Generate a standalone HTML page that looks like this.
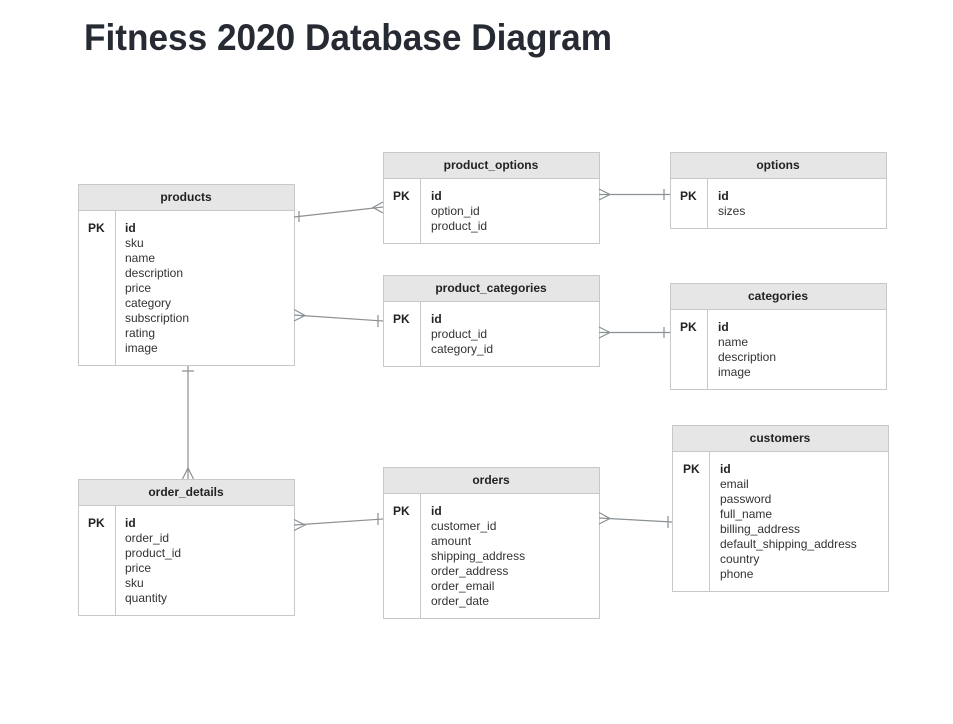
<!DOCTYPE html>
<html><head><meta charset="utf-8"><style>
html,body{margin:0;padding:0;background:#fff;}
svg{display:block;}
.h{font:bold 12px "Liberation Sans",sans-serif;fill:#222;}
.t{font:12px "Liberation Sans",sans-serif;fill:#333;transform:translateY(1px);}
.b{font:bold 12px "Liberation Sans",sans-serif;fill:#222;transform:translateY(1px);}
.box{fill:#fff;stroke:#c8c8c8;stroke-width:1;}
.hd{fill:#e6e6e6;stroke:#c8c8c8;stroke-width:1;}
.ln{stroke:#8a9094;stroke-width:1.2;fill:none;}
</style></head><body>
<svg width="953" height="724" xmlns="http://www.w3.org/2000/svg">
<text x="84" y="50" textLength="528" lengthAdjust="spacingAndGlyphs" style="font:bold 37px 'Liberation Sans',sans-serif;fill:#262b33">Fitness 2020 Database Diagram</text>

<rect class="box" x="78.5" y="184.5" width="216" height="181"/>
<rect class="hd" x="78.5" y="184.5" width="216" height="26"/>
<line x1="115.5" y1="210.5" x2="115.5" y2="365.5" stroke="#c8c8c8"/>
<text class="h" x="186" y="201" text-anchor="middle">products</text>
<text class="b" x="88" y="231">PK</text>
<text class="b" x="125" y="231">id</text>
<text class="t" x="125" y="246">sku</text>
<text class="t" x="125" y="261">name</text>
<text class="t" x="125" y="276">description</text>
<text class="t" x="125" y="291">price</text>
<text class="t" x="125" y="306">category</text>
<text class="t" x="125" y="321">subscription</text>
<text class="t" x="125" y="336">rating</text>
<text class="t" x="125" y="351">image</text>

<rect class="box" x="383.5" y="152.5" width="216" height="91"/>
<rect class="hd" x="383.5" y="152.5" width="216" height="26"/>
<line x1="420.5" y1="178.5" x2="420.5" y2="243.5" stroke="#c8c8c8"/>
<text class="h" x="491" y="169" text-anchor="middle">product_options</text>
<text class="b" x="393" y="199">PK</text>
<text class="b" x="431" y="199">id</text>
<text class="t" x="431" y="214">option_id</text>
<text class="t" x="431" y="229">product_id</text>

<rect class="box" x="670.5" y="152.5" width="216" height="76"/>
<rect class="hd" x="670.5" y="152.5" width="216" height="26"/>
<line x1="707.5" y1="178.5" x2="707.5" y2="228.5" stroke="#c8c8c8"/>
<text class="h" x="778" y="169" text-anchor="middle">options</text>
<text class="b" x="680" y="199">PK</text>
<text class="b" x="718" y="199">id</text>
<text class="t" x="718" y="214">sizes</text>

<rect class="box" x="383.5" y="275.5" width="216" height="91"/>
<rect class="hd" x="383.5" y="275.5" width="216" height="26"/>
<line x1="420.5" y1="301.5" x2="420.5" y2="366.5" stroke="#c8c8c8"/>
<text class="h" x="491" y="292" text-anchor="middle">product_categories</text>
<text class="b" x="393" y="322">PK</text>
<text class="b" x="431" y="322">id</text>
<text class="t" x="431" y="337">product_id</text>
<text class="t" x="431" y="352">category_id</text>

<rect class="box" x="670.5" y="283.5" width="216" height="106"/>
<rect class="hd" x="670.5" y="283.5" width="216" height="26"/>
<line x1="707.5" y1="309.5" x2="707.5" y2="389.5" stroke="#c8c8c8"/>
<text class="h" x="778" y="300" text-anchor="middle">categories</text>
<text class="b" x="680" y="330">PK</text>
<text class="b" x="718" y="330">id</text>
<text class="t" x="718" y="345">name</text>
<text class="t" x="718" y="360">description</text>
<text class="t" x="718" y="375">image</text>

<rect class="box" x="672.5" y="425.5" width="216" height="166"/>
<rect class="hd" x="672.5" y="425.5" width="216" height="26"/>
<line x1="709.5" y1="451.5" x2="709.5" y2="591.5" stroke="#c8c8c8"/>
<text class="h" x="780" y="442" text-anchor="middle">customers</text>
<text class="b" x="683" y="472">PK</text>
<text class="b" x="720" y="472">id</text>
<text class="t" x="720" y="487">email</text>
<text class="t" x="720" y="502">password</text>
<text class="t" x="720" y="517">full_name</text>
<text class="t" x="720" y="532">billing_address</text>
<text class="t" x="720" y="547">default_shipping_address</text>
<text class="t" x="720" y="562">country</text>
<text class="t" x="720" y="577">phone</text>

<rect class="box" x="383.5" y="467.5" width="216" height="151"/>
<rect class="hd" x="383.5" y="467.5" width="216" height="26"/>
<line x1="420.5" y1="493.5" x2="420.5" y2="618.5" stroke="#c8c8c8"/>
<text class="h" x="491" y="484" text-anchor="middle">orders</text>
<text class="b" x="393" y="514">PK</text>
<text class="b" x="431" y="514">id</text>
<text class="t" x="431" y="529">customer_id</text>
<text class="t" x="431" y="544">amount</text>
<text class="t" x="431" y="559">shipping_address</text>
<text class="t" x="431" y="574">order_address</text>
<text class="t" x="431" y="589">order_email</text>
<text class="t" x="431" y="604">order_date</text>

<rect class="box" x="78.5" y="479.5" width="216" height="136"/>
<rect class="hd" x="78.5" y="479.5" width="216" height="26"/>
<line x1="115.5" y1="505.5" x2="115.5" y2="615.5" stroke="#c8c8c8"/>
<text class="h" x="186" y="496" text-anchor="middle">order_details</text>
<text class="b" x="88" y="526">PK</text>
<text class="b" x="125" y="526">id</text>
<text class="t" x="125" y="541">order_id</text>
<text class="t" x="125" y="556">product_id</text>
<text class="t" x="125" y="571">price</text>
<text class="t" x="125" y="586">sku</text>
<text class="t" x="125" y="601">quantity</text>

<path class="ln" d="M294 217 L383 207 M299 211 V222 M383 202 L373 207.5 L383 213"/>
<path class="ln" d="M599 194.5 H670 M599 189 L610 194.5 L599 200 M664 189 V200"/>
<path class="ln" d="M294 315 L383 321 M294 309.5 L305 315.5 L294 321 M378 315 V327"/>
<path class="ln" d="M599 332.5 H670 M599 327 L610 332.5 L599 338 M664 327 V338"/>
<path class="ln" d="M188 366 V479 M182 371 H194 M182.5 479 L188 468 L193.5 479"/>
<path class="ln" d="M294 525 L383 519 M294 519.5 L305 525 L294 530.5 M378 513 V525"/>
<path class="ln" d="M599 518 L672 522 M599 512.5 L610 518.5 L599 524 M668 516 V528"/>
</svg>
</body></html>
